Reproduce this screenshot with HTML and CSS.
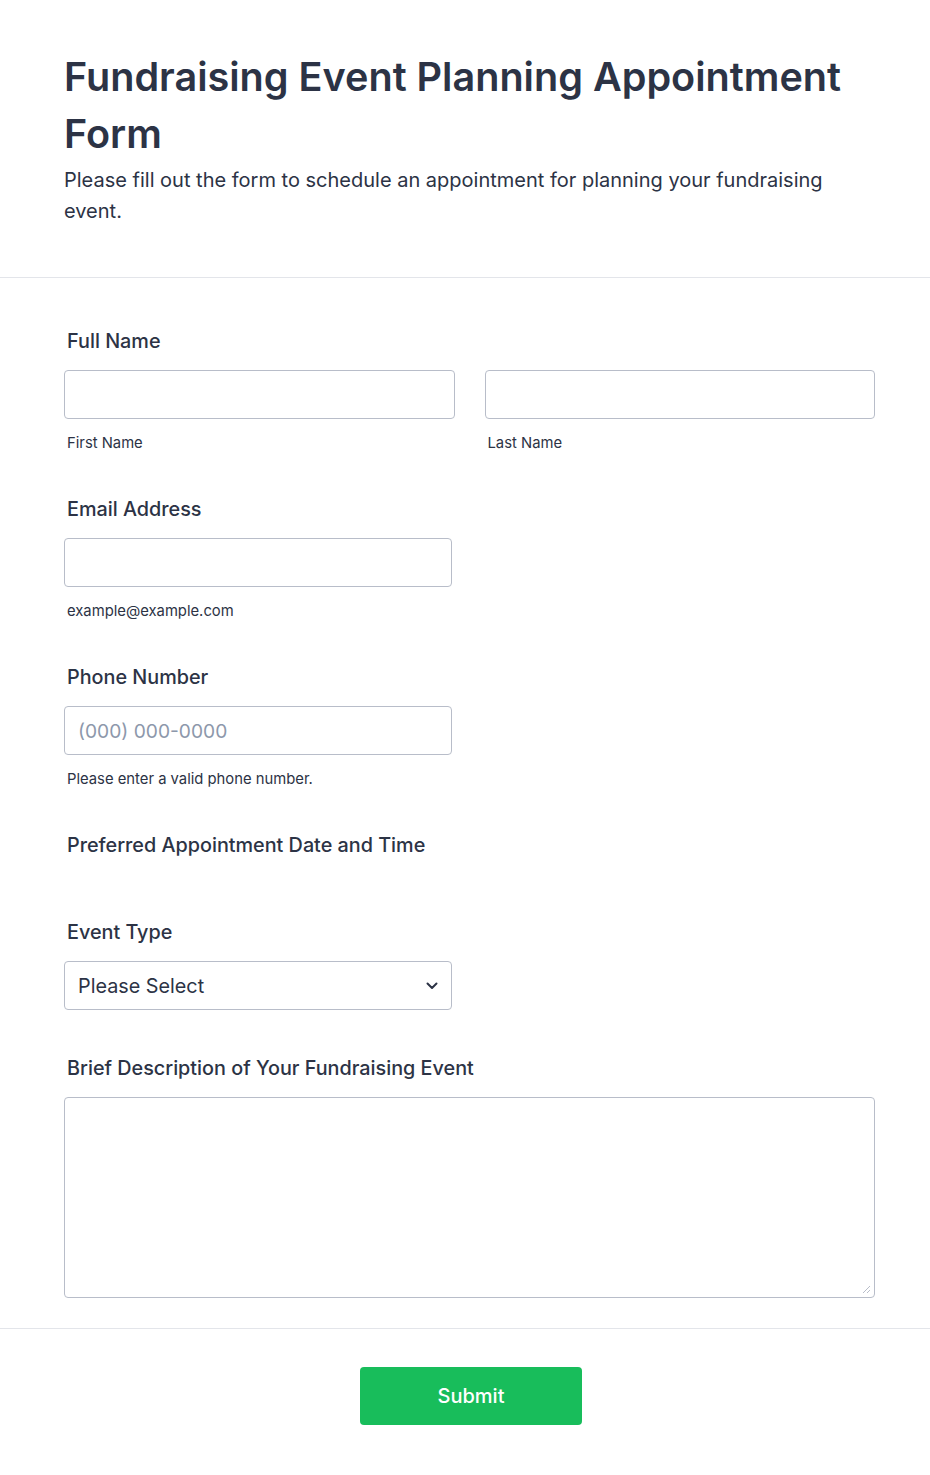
FILE: index.html
```html
<!DOCTYPE html>
<html lang="en">
<head>
<meta charset="utf-8">
<title>Fundraising Event Planning Appointment Form</title>
<link rel="stylesheet" href="styles.css">
</head>
<body>
<form class="form">
  <header class="form-header">
    <h1 class="title">Fundraising Event Planning Appointment Form</h1>
    <p class="subtitle">Please fill out the form to schedule an appointment for planning your fundraising event.</p>
  </header>
  <section class="fields">
    <div class="row">
      <label class="label">Full Name</label>
      <div class="name-grid">
        <div class="sub-field">
          <input class="input" type="text">
          <span class="sublabel">First Name</span>
        </div>
        <div class="sub-field">
          <input class="input" type="text">
          <span class="sublabel">Last Name</span>
        </div>
      </div>
    </div>
    <div class="row">
      <label class="label">Email Address</label>
      <div class="half">
        <input class="input" type="text">
        <span class="sublabel">example@example.com</span>
      </div>
    </div>
    <div class="row">
      <label class="label">Phone Number</label>
      <div class="half">
        <input class="input" type="text" placeholder="(000) 000-0000">
        <span class="sublabel">Please enter a valid phone number.</span>
      </div>
    </div>
    <div class="row">
      <label class="label">Preferred Appointment Date and Time</label>
    </div>
    <div class="row">
      <label class="label">Event Type</label>
      <div class="half select">
        <span class="select-text">Please Select</span>
        <svg class="chevron" width="12" height="8" viewBox="0 0 12 8"><path d="M1.5 1.5 L6 6 L10.5 1.5" fill="none" stroke="#2c3345" stroke-width="2" stroke-linecap="round" stroke-linejoin="round"/></svg>
      </div>
    </div>
    <div class="row last">
      <label class="label">Brief Description of Your Fundraising Event</label>
      <div class="textarea">
        <svg class="grip" width="10" height="10" viewBox="0 0 10 10"><path d="M9 2 L2 9 M9 6 L6 9" stroke="#b8bdc9" stroke-width="1" fill="none"/></svg>
      </div>
    </div>
  </section>
  <footer class="form-footer">
    <button class="submit" type="button">Submit</button>
  </footer>
</form>
</body>
</html>
```
FILE: styles.css
```css
* { box-sizing: border-box; }
html, body { margin: 0; padding: 0; background: #ffffff; }
body {
  font-family: Inter, "Noto Sans", "Liberation Sans", sans-serif;
  color: #2c3345;
}
.form-header {
  padding: 49px 55px 50px 64px;
  border-bottom: 1px solid #e3e5ea;
}
.title {
  margin: 0;
  font-size: 39.6px;
  line-height: 57px;
  font-weight: 600;
  color: #2c3345;
}
.subtitle {
  margin: 2px 0 0;
  font-size: 20px;
  line-height: 31px;
  font-weight: 400;
  color: #2c3345;
}
.fields {
  padding: 28px 55px 0 64px;
  border-bottom: 1px solid #e3e5ea;
}
.row {
  padding: 24px 0 23px;
  display: flex;
  flex-direction: column;
}
.row.has-sub { padding-bottom: 22px; }
.row.last { padding-bottom: 30px; }
.label {
  display: block;
  font-size: 19.8px;
  line-height: 22px;
  font-weight: 500;
  padding-left: 3px;
  margin-bottom: 18px;
}
.name-grid {
  display: grid;
  grid-template-columns: 1fr 1fr;
  column-gap: 30px;
}
.sub-field, .half { display: flex; flex-direction: column; }
.half { width: 388px; }
.input {
  display: block;
  width: 100%;
  height: 49px;
  border: 1px solid #b8bdc9;
  border-radius: 4px;
  padding: 0 13px;
  font-family: inherit;
  font-size: 19.2px;
  color: #2c3345;
  background: #fff;
  outline: none;
}
.input::placeholder { color: #8d98ab; }
.sublabel {
  display: block;
  margin-top: 15px;
  margin-bottom: -1px;
  font-size: 14.8px;
  line-height: 18px;
  padding-left: 3px;
  color: #2c3345;
}
.select {
  height: 49px;
  border: 1px solid #b8bdc9;
  border-radius: 4px;
  flex-direction: row;
  align-items: center;
  justify-content: space-between;
  padding: 0 13px;
}
.select-text { font-size: 19.8px; color: #2c3345; }
.chevron { display: block; }
.textarea {
  height: 201px;
  border: 1px solid #b8bdc9;
  border-radius: 4px;
  display: flex;
  align-items: flex-end;
  justify-content: flex-end;
  padding: 3px;
}
.grip { display: block; }
.form-footer {
  display: flex;
  justify-content: center;
  padding: 38px 0 50px 12px;
}
.submit {
  width: 222px;
  height: 58px;
  border: none;
  border-radius: 4px;
  background: #18bd5b;
  color: #ffffff;
  font-family: inherit;
  font-size: 20px;
  font-weight: 500;
  cursor: pointer;
}
```
